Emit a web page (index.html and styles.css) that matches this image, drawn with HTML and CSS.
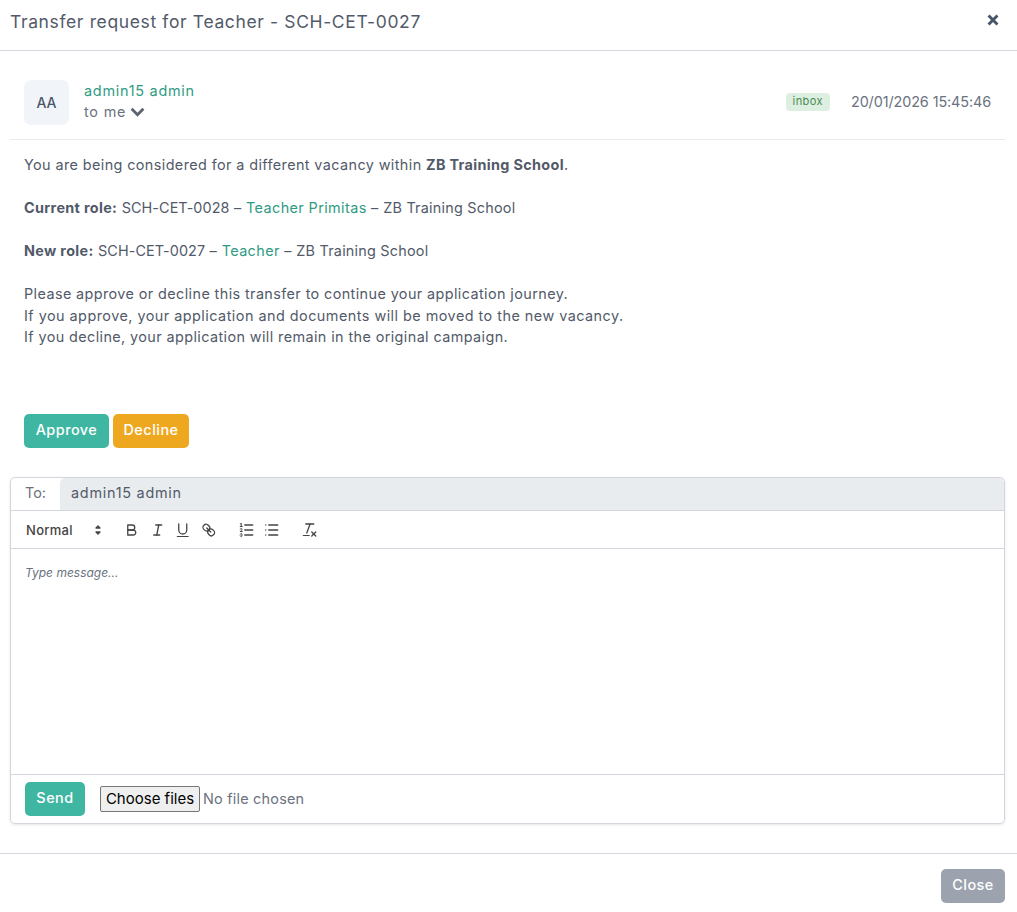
FILE: index.html
```html
<!DOCTYPE html>
<html lang="en">
<head>
<meta charset="utf-8">
<title>Transfer request</title>
<link rel="stylesheet" href="styles.css">
</head>
<body>
<div class="modal">
  <header class="modal-head">
    <h1 class="modal-title">Transfer request for Teacher - SCH-CET-0027</h1>
    <svg class="close-x" viewBox="0 0 10 10" aria-label="Close"><path d="M1.3 1.3 8.7 8.7M8.7 1.3 1.3 8.7"/></svg>
  </header>
  <main class="modal-body">
    <section class="msg-head">
      <div class="avatar">AA</div>
      <div class="sender">
        <div class="sender-name">admin15 admin</div>
        <div class="sender-to">to me <svg class="chev" viewBox="0 0 14 9"><path d="M1.5 1.5 7 7l5.5-5.5"/></svg></div>
      </div>
      <span class="badge">inbox</span>
      <span class="date">20/01/2026 15:45:46</span>
    </section>
    <section class="msg-body">
      <p>You are being considered for a different vacancy within <b>ZB Training School</b>.</p>
      <p><b>Current role:</b> <span class="code">SCH-CET-0028</span> – <a class="link">Teacher Primitas</a> – <span class="school">ZB Training School</span></p>
      <p><b>New role:</b> <span class="code">SCH-CET-0027</span> – <a class="link">Teacher</a> – <span class="school">ZB Training School</span></p>
      <p>Please approve or decline this transfer to continue your application journey.<br><span class="long">If you approve, your application and documents will be moved to the new vacancy.</span><br>If you decline, your application will remain in the original campaign.</p>
    </section>
    <div class="actions">
      <button class="btn btn-teal btn-approve">Approve</button>
      <button class="btn btn-amber">Decline</button>
    </div>
    <section class="composer">
      <div class="to-row">
        <span class="to-label">To:</span>
        <span class="to-value">admin15 admin</span>
      </div>
      <div class="toolbar">
        <span class="picker">Normal
          <svg class="ico picker-arrow" viewBox="0 0 18 18"><polygon points="7 11 9 13 11 11 7 11"/><polygon points="7 7 9 5 11 7 7 7"/></svg>
        </span>
        <span class="tool-group">
          <svg class="ico" viewBox="0 0 18 18"><path d="M5,4H9.5A2.5,2.5,0,0,1,12,6.5v0A2.5,2.5,0,0,1,9.5,9H5V4Z"/><path d="M5,9h5.5A2.5,2.5,0,0,1,13,11.5v0A2.5,2.5,0,0,1,10.5,14H5V9Z"/></svg>
          <svg class="ico" viewBox="0 0 18 18"><line x1="7" x2="13" y1="4" y2="4"/><line x1="5" x2="11" y1="14" y2="14"/><line x1="8" x2="10" y1="14" y2="4"/></svg>
          <svg class="ico" viewBox="0 0 18 18"><path d="M5,3V9a4.012,4.012,0,0,0,4,4H9a4.012,4.012,0,0,0,4-4V3"/><rect class="fill" height="1" rx=".5" ry=".5" width="12" x="3" y="15"/></svg>
          <svg class="ico" viewBox="0 0 18 18"><line x1="7" x2="11" y1="7" y2="11"/><path d="M8.9,4.577a3.476,3.476,0,0,1,.36,4.679A3.476,3.476,0,0,1,4.577,8.9C3.185,7.5,2.035,6.4,4.217,4.217S7.5,3.185,8.9,4.577Z"/><path d="M13.423,9.1a3.476,3.476,0,0,0-4.679-.36,3.476,3.476,0,0,0,.36,4.679c1.392,1.392,2.5,2.542,4.679.36S14.815,10.5,13.423,9.1Z"/></svg>
        </span>
        <span class="tool-group">
          <svg class="ico" viewBox="0 0 18 18"><line x1="7" x2="15" y1="4" y2="4"/><line x1="7" x2="15" y1="9" y2="9"/><line x1="7" x2="15" y1="14" y2="14"/><line class="thin" x1="2.5" x2="4.5" y1="5.5" y2="5.5"/><path class="fill" d="M3.5,6A0.5,0.5,0,0,1,3,5.5V3.085l-0.276.138A0.5,0.5,0,0,1,2.053,3c-0.124-.247-0.023-0.324.224-0.447l1-.5A0.5,0.5,0,0,1,4,2.5v3A0.5,0.5,0,0,1,3.5,6Z"/><path class="thin" d="M4.5,10.5h-2c0-.234,1.85-1.076,1.85-2.234A0.959,0.959,0,0,0,2.5,8.156"/><path class="thin" d="M2.5,14.846a0.959,0.959,0,0,0,1.85-.109A0.7,0.7,0,0,0,3.75,14a0.688,0.688,0,0,0,.6-0.736,0.959,0.959,0,0,0-1.85-.109"/></svg>
          <svg class="ico" viewBox="0 0 18 18"><line x1="6" x2="15" y1="4" y2="4"/><line x1="6" x2="15" y1="9" y2="9"/><line x1="6" x2="15" y1="14" y2="14"/><line x1="3" x2="3" y1="4" y2="4"/><line x1="3" x2="3" y1="9" y2="9"/><line x1="3" x2="3" y1="14" y2="14"/></svg>
        </span>
        <span class="tool-group">
          <svg class="ico" viewBox="0 0 18 18"><line x1="5" x2="13" y1="3" y2="3"/><line x1="6" x2="9.35" y1="12" y2="3"/><line x1="11" x2="15" y1="11" y2="15"/><line x1="15" x2="11" y1="11" y2="15"/><rect class="fill" height="1" rx=".5" ry=".5" width="7" x="2" y="14"/></svg>
        </span>
      </div>
      <div class="editor">Type message...</div>
      <div class="composer-foot">
        <button class="btn btn-teal btn-send">Send</button>
        <span class="file">
          <button class="file-btn">Choose files</button>
          <span class="file-name">No file chosen</span>
        </span>
      </div>
    </section>
  </main>
  <footer class="modal-foot">
    <button class="btn btn-gray">Close</button>
  </footer>
</div>
</body>
</html>
```

FILE: styles.css
```css
* { box-sizing: border-box; }
html, body { margin: 0; height: 100%; background: #fff; }
body { font-family: Inter, "Open Sans", sans-serif; font-size: 14.4px; color: #525a69; }
.modal { width: 1017px; height: 912px; display: flex; flex-direction: column; overflow: hidden; }

.modal-head { height: 51px; border-bottom: 1px solid #d5d5de; padding: 0 18px 7px 10px; display: flex; align-items: center; justify-content: space-between; flex: none; }
.modal-title { margin: 0; font-size: 17.5px; font-weight: 400; letter-spacing: .63px; color: #525a69; }
.close-x { width: 12px; height: 12px; fill: none; stroke: #475569; stroke-width: 2.4; margin-top: -3px; }

.modal-body { flex: 1; padding: 29px 12px 0 10px; display: flex; flex-direction: column; }

.msg-head { height: 60px; padding: 0 14px 14px; border-bottom: 1px solid #ebebef; display: flex; align-items: flex-start; }
.avatar { width: 45px; height: 45px; border-radius: 7px; background: #f1f5f9; color: #475569; font-weight: 500; font-size: 14px; padding-bottom: 1px; display: flex; align-items: center; justify-content: center; flex: none; }
.sender { margin-left: 15px; flex: 1; line-height: 21px; }
.sender-name { color: #2f9b84; letter-spacing: .75px; }
.sender-to { color: #6b7280; letter-spacing: .8px; display: flex; align-items: center; gap: 4px; }
.chev { width: 15px; height: 10px; fill: none; stroke: #5b6270; stroke-width: 2.6; }
.badge { margin-top: 13px; height: 18px; line-height: 17px; padding: 0 7px; border-radius: 4px; background: #dcefe0; color: #4a8a55; font-size: 11px; letter-spacing: .42px; }
.date { margin: 12px 0 0 21px; line-height: 20px; color: #6b7280; letter-spacing: -.1px; }

.msg-body { padding: 14px 14px 0; line-height: 21.5px; letter-spacing: .4px; height: 274px; flex: none; }
.msg-body p { margin: 0 0 21.5px; }
.msg-body b { font-weight: 700; letter-spacing: .33px; }
.msg-body .code { letter-spacing: .08px; }
.msg-body .school { letter-spacing: .23px; }
.msg-body .long { letter-spacing: .475px; }
.link { color: #2f9b84; }

.actions { display: flex; gap: 4px; padding-left: 14px; height: 34px; flex: none; }
.btn { border: 0; border-radius: 5px; color: #fff; font: 500 14.4px Inter, sans-serif; height: 34px; padding: 0 0 3px; letter-spacing: .5px; }
.btn-teal { background: #3fb6a2; }
.btn-amber { background: #eea820; width: 76px; }
.btn-approve { width: 85px; }
.btn-send { width: 60px; }
.btn-gray { background: #9ca3af; width: 64px; }

.composer { margin-top: 29px; height: 347px; flex: none; border: 1px solid #d5d5de; border-radius: 5px; box-shadow: 0 1px 3px rgba(0,0,0,.1); display: flex; flex-direction: column; }
.to-row { height: 33px; display: flex; border-bottom: 1px solid #d5d5de; flex: none; }
.to-label { width: 49px; padding-left: 14px; line-height: 30px; color: #6b7280; }
.to-value { flex: 1; background: #e9ecef; padding-left: 11px; line-height: 30px; letter-spacing: .75px; border-radius: 5px 5px 0 0; }

.toolbar { height: 38px; flex: none; border-bottom: 1px solid #d5d5de; display: flex; align-items: center; padding-left: 15px; }
.picker { width: 93px; display: flex; align-items: center; font-size: 13px; font-weight: 500; letter-spacing: .3px; color: #444; flex: none; }
.tool-group { display: flex; margin-right: 12.5px; }
.ico { width: 25.5px; height: 18px; fill: none; stroke: #444; stroke-width: 1.3; stroke-linecap: round; stroke-linejoin: round; flex: none; }
.picker-arrow { width: 18px; margin-left: auto; margin-right: 12px; }
.ico .fill { fill: #444; stroke: none; }
.ico .thin { stroke-width: 1; }

.editor { flex: 1; padding: 15px 14px; font-size: 12px; font-style: italic; color: #6b7280; line-height: 18px; }

.composer-foot { height: 49px; flex: none; border-top: 1px solid #d5d5de; padding: 7px 14px; display: flex; align-items: center; gap: 15px; }
.file { display: flex; align-items: center; gap: 3px; }
.file-btn { width: 100px; height: 26px; padding: 0 0 1px; border: 1px solid #767676; border-radius: 2px; background: #efefef; color: #000; font: 15px Inter, sans-serif; }
.file-name { color: #6b7280; letter-spacing: .23px; padding-bottom: 2px; }

.modal-foot { height: 59px; flex: none; border-top: 1px solid #d5d5de; padding: 15px 12px 0; display: flex; justify-content: flex-end; }
```
